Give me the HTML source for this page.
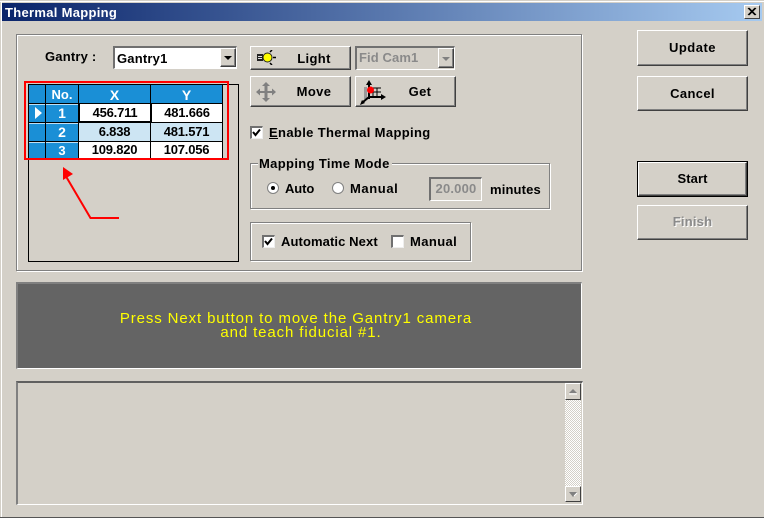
<!DOCTYPE html>
<html><head><meta charset="utf-8"><style>
html,body{margin:0;padding:0;width:764px;height:518px;overflow:hidden;background:#d4d0c8}
#w{position:relative;width:764px;height:518px;background:#d4d0c8;font:bold 13px/16px "Liberation Sans",sans-serif;color:#000;letter-spacing:.35px;overflow:hidden}
#w div{position:absolute;box-sizing:border-box}
.t{white-space:nowrap}
.b{background:#d4d0c8;border-top:1px solid #fff;border-left:1px solid #fff;border-right:1px solid #404040;border-bottom:1px solid #404040;box-shadow:inset -1px -1px 0 #808080;text-align:center}
.e{border:1px solid #808080;box-shadow:1px 1px 0 #fff,inset 1px 1px 0 #fff}
.s{border-top:2px solid #707070;border-left:2px solid #707070;border-right:1px solid #fff;border-bottom:1px solid #fff}
.c{width:13px;height:13px;background:#fff;border-top:2px solid #707070;border-left:2px solid #707070;border-right:1px solid #eee;border-bottom:1px solid #eee}
.cell{background:#fff;text-align:center;line-height:18px;letter-spacing:-.2px}
.h{background:#1a8fd6;color:#fff;text-align:center;line-height:18px;font-size:14px;letter-spacing:0}
</style></head><body><div id="w">
<div style="left:0;top:517px;width:764px;height:1px;background:#555"></div>
<div style="left:0;top:0;width:764px;height:1px;background:#d4d0c8"></div>
<div style="left:0;top:1px;width:764px;height:1px;background:#fff"></div>
<div style="left:1px;top:1px;width:1px;height:516px;background:#fff"></div>
<div style="left:2px;top:3px;width:760px;height:18px;background:linear-gradient(90deg,#0a246a,#a6caf0)"></div>
<div class="t" style="left:5px;top:5px;color:#fff;font-size:13px;letter-spacing:.3px">Thermal Mapping</div>
<div class="b" style="left:744px;top:5px;width:16px;height:14px;box-shadow:none"><svg width="14" height="12" style="position:absolute;left:0;top:0"><path d="M3 2l7 7M4 2l7 7M10 2l-7 7M11 2l-7 7" stroke="#000" stroke-width="1" fill="none"/></svg></div>

<div class="e" style="left:16px;top:34px;width:566px;height:237px"></div>
<div class="t" style="left:45px;top:49px;letter-spacing:.2px">Gantry :</div>
<div class="s" style="left:113px;top:46px;width:124px;height:23px;background:#fff"></div>
<div class="t" style="left:117px;top:51px;font-size:13px;letter-spacing:.2px">Gantry1</div>
<div class="b" style="left:220px;top:48px;width:16px;height:19px"><svg width="14" height="17" style="position:absolute;left:0;top:0"><path d="M3 7h8l-4 4z" fill="#000"/></svg></div>

<div style="left:28px;top:84px;width:211px;height:178px;border:1px solid #000"></div>
<div style="left:29px;top:85px;width:194px;height:75px;background:#000"></div>
<div class="h" style="left:29px;top:85px;width:16px;height:18px"></div>
<div class="h" style="left:46px;top:85px;width:32px;height:18px;font-size:13px;line-height:20px">No.</div>
<div class="h" style="left:79px;top:85px;width:71px;height:18px;line-height:20px">X</div>
<div class="h" style="left:151px;top:85px;width:71px;height:18px;line-height:20px">Y</div>
<div class="h" style="left:29px;top:104px;width:16px;height:18px;border-top:1px solid #bfe0f5"></div>
<div class="h" style="left:46px;top:104px;width:32px;height:18px;border-top:1px solid #bfe0f5;line-height:17px">1</div>
<div class="cell" style="left:79px;top:103px;width:72px;height:19px;border:1px solid #000;line-height:17px">456.711</div>
<div class="cell" style="left:152px;top:104px;width:70px;height:18px">481.666</div>
<svg style="position:absolute;left:34px;top:106px" width="9" height="14"><path d="M1 1l7 6-7 6z" fill="#fff"/></svg>
<div class="h" style="left:29px;top:123px;width:16px;height:18px;border-top:1px solid #bfe0f5"></div>
<div class="h" style="left:46px;top:123px;width:32px;height:18px;border-top:1px solid #bfe0f5;line-height:17px">2</div>
<div class="cell" style="left:79px;top:123px;width:71px;height:18px;background:#cde5f3">6.838</div>
<div class="cell" style="left:151px;top:123px;width:71px;height:18px;background:#cde5f3">481.571</div>
<div class="h" style="left:29px;top:142px;width:16px;height:18px;border-top:1px solid #bfe0f5"></div>
<div class="h" style="left:46px;top:142px;width:32px;height:18px;border-top:1px solid #bfe0f5;line-height:16px;font-size:13px">3</div>
<div class="cell" style="left:79px;top:142px;width:71px;height:18px;line-height:16px">109.820</div>
<div class="cell" style="left:151px;top:142px;width:71px;height:18px;line-height:16px">107.056</div>
<div style="left:24px;top:81px;width:205px;height:79px;border:2px solid #f00"></div>
<svg style="position:absolute;left:55px;top:160px" width="70" height="65"><path d="M9 13L35.500 58H64" fill="none" stroke="#f00" stroke-width="2"/><path d="M8 7L8 20L18 14z" fill="#f00"/></svg>

<div class="b" style="left:250px;top:46px;width:101px;height:24px;line-height:24px;padding-left:27px">Light</div>
<svg style="position:absolute;left:256px;top:50px" width="22" height="15"><rect x="1" y="4" width="6" height="7" fill="#222"/><path d="M2 6h4v1H2zM2 8h4v1H2z" fill="#ddd"/><circle cx="11.500" cy="7.500" r="4.500" fill="#ff0" stroke="#222"/><path d="M14 2l2-2M17 7.500h3M14 13l2 2" stroke="#000" stroke-width="1.500"/></svg>
<div class="s" style="left:355px;top:46px;width:100px;height:24px"></div>
<div class="t" style="left:359px;top:50px;color:#8a8a8a;letter-spacing:.1px">Fid Cam1</div>
<div class="b" style="left:438px;top:48px;width:16px;height:20px"><svg width="14" height="18" style="position:absolute;left:0;top:0"><path d="M3 8h8l-4 4z" fill="#808080"/></svg></div>

<div class="b" style="left:250px;top:76px;width:101px;height:31px;line-height:30px;padding-left:27px">Move</div>
<svg style="position:absolute;left:255px;top:81px" width="22" height="22"><path d="M11 1l4 4h-2.500v5H17V7.500l4 3.500-4 3.500V12h-4.500v5H15l-4 4-4-4h2.500v-5H5v2.500L1 11l4-3.500V10h4.500V5H7z" fill="#808080"/></svg>
<div class="b" style="left:355px;top:76px;width:101px;height:31px;line-height:30px;padding-left:29px">Get</div>
<svg style="position:absolute;left:358px;top:79px" width="28" height="26"><path d="M6 8h3v12H6z" fill="#999"/><path d="M11 4v16M5 23L11 18H24" stroke="#000" stroke-width="2" fill="none"/><path d="M8 6l3-5 3 5zM23 15l5 3-5 3zM2 26l2-5 3 3z" fill="#000"/><path d="M11 9h12M11 13h12M15 9v9M19 9v9" stroke="#000"/><circle cx="12.500" cy="11" r="3.500" fill="#f00"/></svg>

<div class="c" style="left:250px;top:126px"></div>
<svg style="position:absolute;left:250px;top:126px" width="13" height="13"><path d="M3 6l2.500 3L10 3.500" stroke="#000" stroke-width="2" fill="none"/></svg>
<div class="t" style="left:269px;top:125px"><u>E</u>nable Thermal Mapping</div>

<div class="e" style="left:250px;top:163px;width:300px;height:46px"></div>
<div class="t" style="left:258px;top:156px;padding:0 2px 0 1px;height:14px;background:linear-gradient(#d4d0c8,#d4d0c8)">Mapping Time Mode</div>
<svg style="position:absolute;left:266px;top:181px" width="14" height="14"><circle cx="7" cy="7" r="5.500" fill="#fff" stroke="#808080"/><circle cx="7" cy="7" r="2" fill="#000"/></svg>
<div class="t" style="left:285px;top:181px;letter-spacing:-.1px">Auto</div>
<svg style="position:absolute;left:331px;top:181px" width="14" height="14"><circle cx="7" cy="7" r="5.500" fill="#fff" stroke="#808080"/></svg>
<div class="t" style="left:350px;top:181px;letter-spacing:.6px">Manual</div>
<div class="s" style="left:429px;top:177px;width:53px;height:24px;text-align:center;color:#8a8a8a;line-height:20px;letter-spacing:.2px">20.000</div>
<div class="t" style="left:490px;top:182px;letter-spacing:.15px">minutes</div>

<div class="e" style="left:250px;top:222px;width:221px;height:39px"></div>
<div class="c" style="left:262px;top:235px"></div>
<svg style="position:absolute;left:262px;top:235px" width="13" height="13"><path d="M3 6l2.500 3L10 3.500" stroke="#000" stroke-width="2" fill="none"/></svg>
<div class="t" style="left:281px;top:234px;letter-spacing:.1px">Automatic Next</div>
<div class="c" style="left:391px;top:235px"></div>
<div class="t" style="left:410px;top:234px;letter-spacing:.4px">Manual</div>

<div class="b" style="left:637px;top:30px;width:111px;height:36px;line-height:34px;letter-spacing:.5px">Update</div>
<div class="b" style="left:637px;top:76px;width:111px;height:35px;line-height:34px">Cancel</div>
<div style="left:637px;top:161px;width:111px;height:36px;border:1px solid #000"></div>
<div class="b" style="left:638px;top:162px;width:109px;height:34px;line-height:32px;letter-spacing:.1px">Start</div>
<div class="b" style="left:637px;top:205px;width:111px;height:35px;line-height:32px;color:#8a8a8a;text-shadow:1px 1px 0 #fff;letter-spacing:.2px">Finish</div>

<div class="s" style="left:16px;top:282px;width:566px;height:87px;background:#646464;border-color:#808080 #fff #fff #808080"></div>
<div style="left:16px;top:312px;width:560px;text-align:center;color:#ff0;font-weight:normal;font-size:15px;line-height:14px;letter-spacing:.88px">Press Next button to move the Gantry1 camera<br><span style="position:relative;left:5px">and teach fiducial #1.</span></div>

<div class="s" style="left:16px;top:381px;width:567px;height:124px;border-color:#606060 #fff #fff #808080"></div>
<div style="left:565px;top:400px;width:16px;height:86px;background-color:#fff;background-image:repeating-conic-gradient(#d4d0c8 0 25%,#fff 0 50%);background-size:2px 2px"></div>
<div class="b" style="left:565px;top:383px;width:16px;height:17px;box-shadow:none"><svg width="14" height="15" style="position:absolute;left:0;top:0"><path d="M3 9l4-4 4 4z" fill="#808080"/><path d="M3 10h8" stroke="#fff"/></svg></div>
<div class="b" style="left:565px;top:486px;width:16px;height:16px;box-shadow:none"><svg width="14" height="14" style="position:absolute;left:0;top:0"><path d="M3 5h8l-4 5z" fill="#808080"/><path d="M8 9l3-3" stroke="#fff"/></svg></div>
</div></body></html>
